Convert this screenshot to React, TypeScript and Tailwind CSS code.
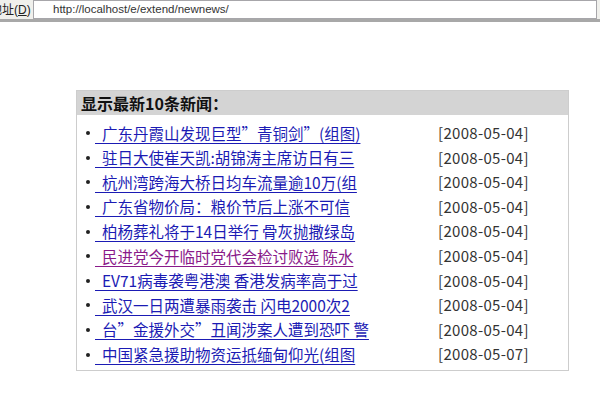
const news = [
  { title: "广东丹霞山发现巨型”青铜剑”(组图)", date: "2008-05-04" },
  { title: "驻日大使崔天凯:胡锦涛主席访日有三", date: "2008-05-04" },
  { title: "杭州湾跨海大桥日均车流量逾10万(组", date: "2008-05-04" },
  { title: "广东省物价局：粮价节后上涨不可信", date: "2008-05-04" },
  { title: "柏杨葬礼将于14日举行 骨灰抛撒绿岛", date: "2008-05-04" },
  { title: "民进党今开临时党代会检讨败选 陈水", date: "2008-05-04", visited: true },
  { title: "EV71病毒袭粤港澳 香港发病率高于过", date: "2008-05-04" },
  { title: "武汉一日两遭暴雨袭击 闪电2000次2", date: "2008-05-04" },
  { title: "台”金援外交”丑闻涉案人遭到恐吓 警", date: "2008-05-04" },
  { title: "中国紧急援助物资运抵缅甸仰光(组图", date: "2008-05-07" },
];

export default function App() {
  return (
    <div className="w-[600px] h-[400px] bg-white overflow-hidden" style={{ fontFamily: '"Noto Sans CJK SC", sans-serif' }}>
      {/* 地址栏 */}
      <div className="h-[22px] bg-[#f0f0ec] flex items-stretch border-b-[3px] border-[#a8a8a8]">
        <div className="w-[33px] overflow-hidden flex items-center text-[12px] text-[#222] whitespace-nowrap" style={{ fontFamily: '"Liberation Sans", "Noto Sans CJK SC", sans-serif' }}>
          <span className="ml-[-10px]">地址(<span className="underline">D</span>)</span>
        </div>
        <div className="w-[564px] bg-white border border-[#a7a6aa] flex items-center pl-[19px] text-[11.5px] text-[#333]" style={{ fontFamily: '"Liberation Sans", sans-serif' }}>
          http://localhost/e/extend/newnews/
        </div>
      </div>

      {/* 新闻列表 */}
      <div className="ml-[76px] mt-[68px] w-[493px] h-[281px] border border-[#cdcdcd]">
        <div className="h-[24px] bg-[#d4d4d4] flex items-center pl-[4px] text-[16px] font-bold text-[#111]">
          显示最新10条新闻：
        </div>
        <ul className="pt-[6px]">
          {news.map((n) => (
            <li key={n.title} className="h-[24.6px] flex items-center text-[15.5px] whitespace-nowrap">
              <span className="w-[18px] flex justify-start pl-[9px]">
                <span className="w-[4px] h-[4px] rounded-full bg-[#222]" />
              </span>
              <a
                href="#"
                className={`w-[343px] underline underline-offset-[3px] ${n.visited ? "text-[#8a1a8a]" : "text-[#1b1bb4]"}`}
              >
                {"\u00a0\u00a0" + n.title}
              </a>
              <span className="text-[15px] text-[#333] tracking-[0.3px]">[{n.date}]</span>
            </li>
          ))}
        </ul>
      </div>
    </div>
  );
}
